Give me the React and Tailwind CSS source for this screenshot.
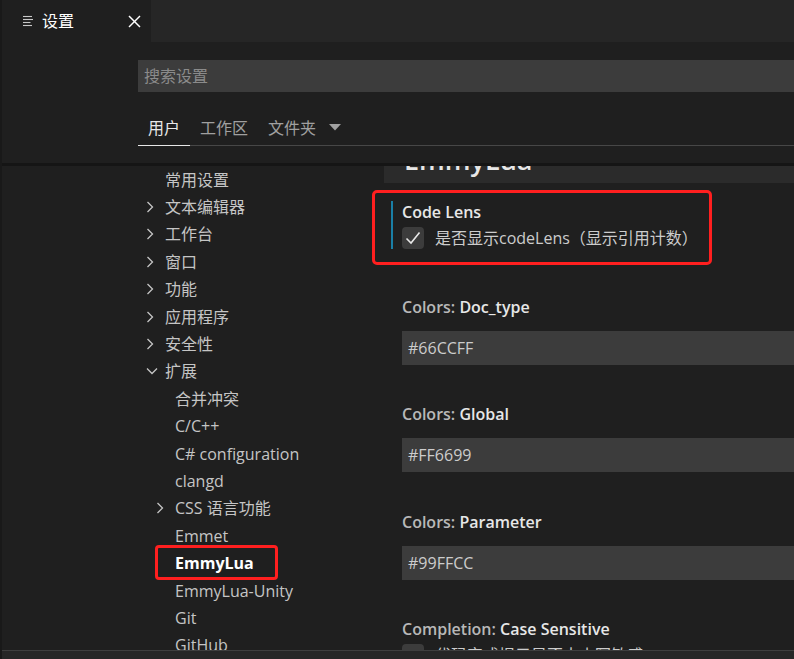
const toc = [
  { label: '常用设置', level: 0 },
  { label: '文本编辑器', level: 0, chevron: 'right' },
  { label: '工作台', level: 0, chevron: 'right' },
  { label: '窗口', level: 0, chevron: 'right' },
  { label: '功能', level: 0, chevron: 'right' },
  { label: '应用程序', level: 0, chevron: 'right' },
  { label: '安全性', level: 0, chevron: 'right' },
  { label: '扩展', level: 0, chevron: 'down' },
  { label: '合并冲突', level: 1 },
  { label: 'C/C++', level: 1 },
  { label: 'C# configuration', level: 1 },
  { label: 'clangd', level: 1 },
  { label: 'CSS 语言功能', level: 1, chevron: 'right' },
  { label: 'Emmet', level: 1 },
  { label: 'EmmyLua', level: 1, active: true },
  { label: 'EmmyLua-Unity', level: 1 },
  { label: 'Git', level: 1 },
  { label: 'GitHub', level: 1 },
]

function Chevron({ dir }) {
  if (dir === 'down') {
    return (
      <svg width="12" height="8" viewBox="0 0 12 8" fill="none" stroke="#c5c5c5" strokeWidth="1.3">
        <polyline points="1,1.5 6,6.5 11,1.5" />
      </svg>
    )
  }
  return (
    <svg width="8" height="12" viewBox="0 0 8 12" fill="none" stroke="#c5c5c5" strokeWidth="1.3">
      <polyline points="1.5,1 6.5,6 1.5,11" />
    </svg>
  )
}

function TocRow({ item }) {
  return (
    <div className={`flex items-center h-[27.4px] ${item.level === 0 ? 'pl-[144px]' : 'pl-[154px]'}`}>
      <span className="w-[19px] flex items-center">{item.chevron && <Chevron dir={item.chevron} />}</span>
      {item.active ? (
        <span className="relative font-bold text-white">
          EmmyLua
          <span className="absolute -left-[20px] -right-[24px] -top-[6px] -bottom-[5px] border-[3px] border-[#ff1f1f] rounded-[4px]" />
        </span>
      ) : (
        <span className="text-[#c5c5c5]">{item.label}</span>
      )}
    </div>
  )
}

function CheckBox({ checked }) {
  return (
    <span className="w-[22px] h-[22px] rounded-[4px] bg-[#3c3c3c] flex items-center justify-center shrink-0">
      {checked && (
        <svg width="18" height="18" viewBox="0 0 18 18" fill="none" stroke="#e8e8e8" strokeWidth="1.6">
          <polyline points="2.5,9.5 7,14 15.5,3.5" />
        </svg>
      )}
    </span>
  )
}

function Label({ cat, name }) {
  return (
    <div className="h-[22px] flex items-center font-semibold">
      <span className="text-[#b8b8b8]">{cat}:&nbsp;</span>
      <span className="text-[#e7e7e7]">{name}</span>
    </div>
  )
}

function ColorInput({ value }) {
  return (
    <div className="mt-[13px] h-[34px] bg-[#3c3c3c] flex items-center pl-[6px] text-[#cccccc]">{value}</div>
  )
}

export default function App() {
  return (
    <div className="w-[794px] h-[659px] overflow-hidden bg-[#1f1f1f] flex flex-col text-[16px] font-['Segoe_UI','Open_Sans','Noto_Sans_CJK_SC',sans-serif] border-l-2 border-[#191919]">
      {/* tab bar */}
      <div className="h-[42px] flex shrink-0">
        <div className="w-[149px] bg-[#1f1f1f] flex items-center">
          <svg className="ml-[20px]" width="12" height="12" viewBox="0 0 12 12" stroke="#c8c8c8" strokeWidth="1.1">
            <line x1="1" y1="1.5" x2="10" y2="1.5" />
            <line x1="1" y1="4.5" x2="11" y2="4.5" />
            <line x1="1" y1="7.5" x2="8.5" y2="7.5" />
            <line x1="1" y1="10.5" x2="10" y2="10.5" />
          </svg>
          <span className="ml-[8px] text-white">设置</span>
          <svg className="ml-auto mr-[10px]" width="13" height="13" viewBox="0 0 13 13" stroke="#ffffff" strokeWidth="1.5">
            <line x1="1" y1="1" x2="12" y2="12" />
            <line x1="12" y1="1" x2="1" y2="12" />
          </svg>
        </div>
        <div className="flex-1 bg-[#262626]" />
      </div>

      {/* header */}
      <div className="h-[121px] shrink-0 pl-[136px] pt-[18px]">
        <div className="h-[32px] bg-[#3c3c3c] flex items-center pl-[6px] text-[#8b8b8b]">搜索设置</div>
        <div className="mt-[18px] flex items-end border-b border-[#474747]">
          <div className="px-[10px] h-[35px] flex items-center text-[#e7e7e7] border-b border-[#e7e7e7] -mb-px">用户</div>
          <div className="px-[10px] h-[35px] flex items-center text-[#a0a0a0]">工作区</div>
          <div className="px-[10px] h-[35px] flex items-center text-[#a0a0a0]">
            文件夹
            <svg className="ml-[13px]" width="12" height="7" viewBox="0 0 12 7" fill="#a0a0a0">
              <polygon points="0,0 12,0 6,6.5" />
            </svg>
          </div>
        </div>
      </div>
      <div className="h-[3px] shrink-0 bg-[#151515]" />

      {/* body */}
      <div className="flex-1 flex min-h-0 overflow-hidden">
        <div className="w-[382px] shrink-0 overflow-hidden">
          {toc.map((item) => (
            <TocRow key={item.label} item={item} />
          ))}
        </div>
        <div className="flex-1 min-w-0">
          <div className="h-[17px] bg-[#2b2b2b] overflow-hidden pl-[20px]">
            <div className="-mt-[24px] text-[27px] leading-[36px] font-semibold text-[#e7e7e7]">EmmyLua</div>
          </div>

          <div className="relative mt-[18px] ml-[7px] border-l-2 border-[#1a7fa6] pl-[9px] h-[48px]">
            <div className="h-[22px] flex items-center font-semibold text-[#e7e7e7]">Code Lens</div>
            <div className="mt-[3px] flex items-center">
              <CheckBox checked />
              <span className="ml-[11px] text-[#cccccc]">是否显示codeLens（显示引用计数）</span>
            </div>
            <span className="absolute -left-[21px] -top-[11px] w-[340px] h-[75px] border-[3px] border-[#ff1f1f] rounded-[5px]" />
          </div>

          <div className="pl-[18px]">
            <div className="mt-[47px]"><Label cat="Colors" name="Doc_type" /></div>
            <ColorInput value="#66CCFF" />
            <div className="mt-[38px]"><Label cat="Colors" name="Global" /></div>
            <ColorInput value="#FF6699" />
            <div className="mt-[39px]"><Label cat="Colors" name="Parameter" /></div>
            <ColorInput value="#99FFCC" />
            <div className="mt-[38px]"><Label cat="Completion" name="Case Sensitive" /></div>
            <div className="mt-[3px] flex items-center">
              <CheckBox />
              <span className="ml-[11px] text-[#cccccc]">代码完成提示是否大小写敏感</span>
            </div>
          </div>
        </div>
      </div>

      {/* bottom bar */}
      <div className="h-[9px] shrink-0 bg-[#262626] border-t border-[#3e3e3e]" />
    </div>
  )
}
